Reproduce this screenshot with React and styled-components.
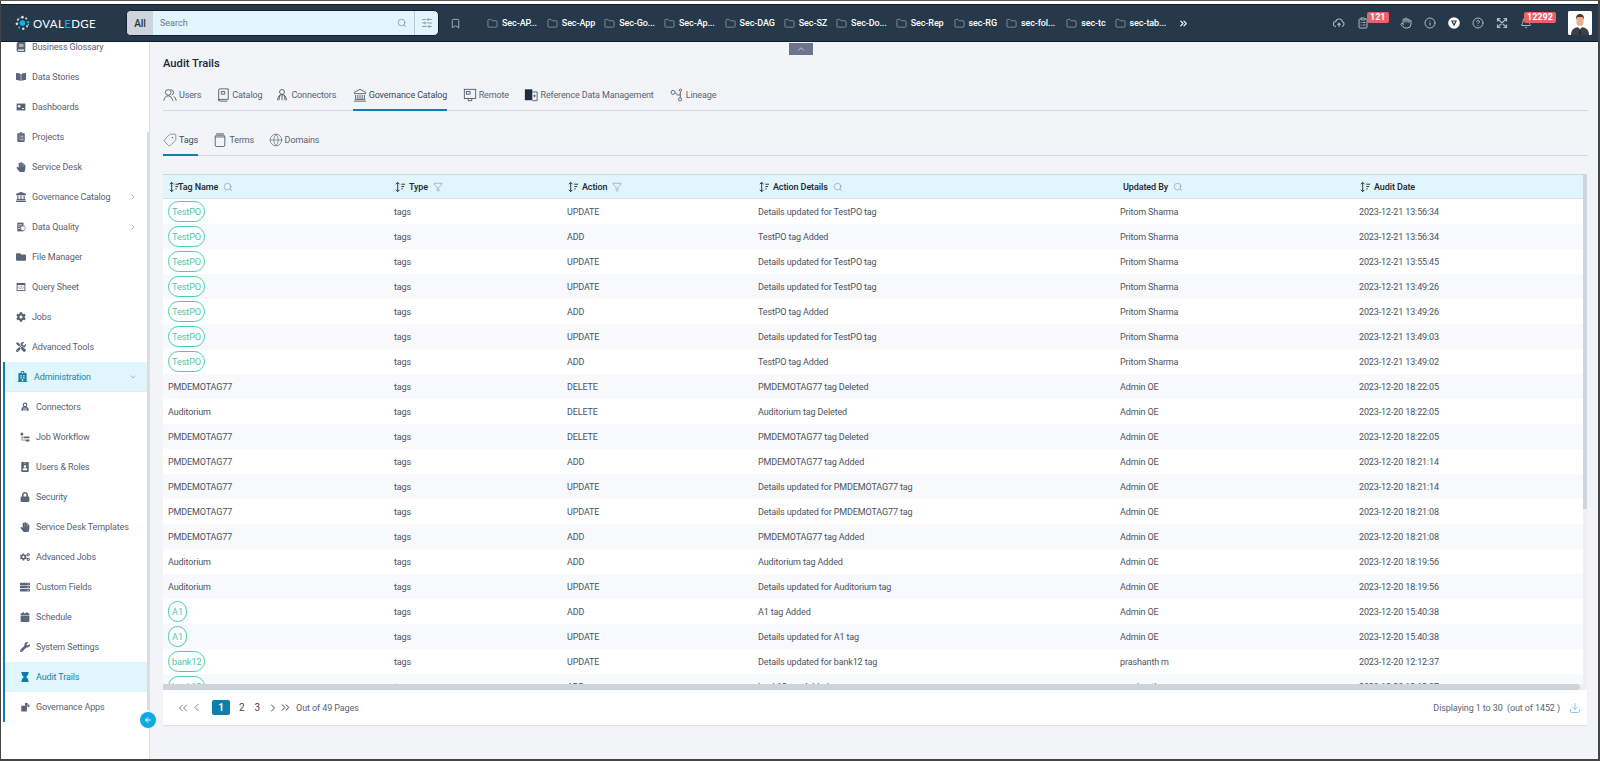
import React from 'react';
import styled, { createGlobalStyle } from 'styled-components';
import {
  Search, SlidersHorizontal, Bookmark, Folder, ChevronsRight, ChevronsLeft, ChevronLeft, ChevronRight,
  ChevronDown, ChevronUp, ClipboardList, Info, CircleHelp, Bell, Filter, Tag, Globe, Download, ArrowLeft, Hand
} from 'lucide-react';
import {
  FaBook, FaClipboardList, FaLandmark, FaFolder, FaCogs, FaTools, FaHospital, FaLock, FaServer,
  FaCalendar, FaWrench, FaHourglass, FaIdBadge, FaHandPaper, FaBookOpen, FaCog
} from 'react-icons/fa';

const Global = createGlobalStyle`
  html, body { margin: 0; padding: 0; background: #fff; }
  body { font-family: Roboto, "Liberation Sans", sans-serif; overflow: hidden; }
  * { box-sizing: border-box; }
`;

const Frame = styled.div`
  position: relative; width: 1600px; height: 761px; display: flex; flex-direction: column;
  background: #fff; border-top: 1px solid #555; border-left: 1px solid #444; border-right: 2px solid #444; border-bottom: 2px solid #444;
  overflow: hidden;
`;
const TopStrip = styled.div` height: 3px; flex: none; background: #fff; `;
const Header = styled.header`
  height: 38px; flex: none; display: flex; align-items: center; background: #26394a;
  border-top: 1px solid #101e2a; border-bottom: 1px solid #101e2a; padding: 0 6px 0 14px; color: #fff;
`;
const Logo = styled.div` display: flex; align-items: center; gap: 3px; width: 81px; flex: none; `;
const LogoText = styled.span`
  font-family: Lato, "Open Sans", sans-serif; font-size: 11.5px; font-weight: 400; letter-spacing: 0.35px; color: #fff;
  white-space: nowrap;
  b { color: #14b1e7; font-weight: 400; }
`;
const SearchBox = styled.div`
  margin-left: 30px; width: 313px; height: 26px; flex: none; display: flex; border-radius: 5px; overflow: hidden;
  background: #e0f5fc; border: 1px solid #10202c; color: #4b5563;
`;
const SearchAll = styled.span`
  width: 26px; background: #cfd3db; display: flex; align-items: center; justify-content: center;
  font-size: 10px; font-weight: 500; color: #27313f;
`;
const SearchHint = styled.span`
  flex: 1; display: flex; align-items: center; padding-left: 7px; font-size: 9px; color: #6b7785;
`;
const SearchIcon = styled.span`
  width: 24px; display: flex; align-items: center; justify-content: center; color: #8c97a3;
`;
const SearchOptions = styled.span`
  width: 24px; display: flex; align-items: center; justify-content: center; border-left: 1px solid #b9c8d0; color: #5a6675;
`;
const BookmarkSlot = styled.span` margin-left: 11px; display: flex; color: #aab6c0; `;
const Folders = styled.nav` margin-left: 26px; display: flex; align-items: center; gap: 9px; `;
const FolderItem = styled.span`
  display: flex; align-items: center; gap: 4px; font-size: 9px; letter-spacing: -0.1px; font-weight: 500; color: #fff; white-space: nowrap;
  svg { color: #aab6c0; flex: none; }
  &:nth-child(n + 2) { margin-left: ${p => p.$nudge || 0}px; }
`;
const More = styled.span` display: flex; margin-left: 3px; color: #fff; `;
const Tools = styled.div` margin-left: auto; display: flex; align-items: center; gap: 12px; color: #aeb9c2; `;
const Tool = styled.span`
  position: relative; display: flex; width: 12px; height: 12px; flex: none; margin-left: ${p => p.$gap || 0}px;
`;
const Badge = styled.span`
  position: absolute; top: -5px; left: ${p => p.$left}px; padding: 0 3px; height: 11px; line-height: 11px; border-radius: 2px;
  background: #ea6166; color: #fff; font-size: 9px; font-weight: 700; white-space: nowrap;
`;
const Avatar = styled.span`
  display: flex; margin-left: 24px; width: 24px; height: 24px; border-radius: 2px; background: #fff; overflow: hidden; flex: none;
`;

const Body = styled.div` flex: 1; display: flex; min-height: 0; `;
const Side = styled.aside`
  position: relative; width: 149px; flex: none; background: #fff; overflow: hidden; padding-right: 2px;
  border-right: 1px solid #dde0e8;
`;
const SideThumb = styled.span`
  position: absolute; right: 0; top: 90px; width: 2px; height: 578px; background: #d9dce5;
`;
const SideList = styled.div` margin-top: -10px; `;
const Item = styled.div`
  height: 30px; display: flex; align-items: center; font-size: 9px; letter-spacing: -0.13px; white-space: nowrap;
  padding-left: 15px; gap: 6px;
  color: ${p => (p.$active ? '#1c7fa6' : '#586174')};
  background: ${p => (p.$active ? '#e0f5fc' : 'transparent')};
  svg.ico { width: 10px; height: 10px; flex: none; color: ${p => (p.$active ? '#0d7ea8' : '#5a6478')}; }
`;
const Chevron = styled.span` margin-left: auto; margin-right: 10px; display: flex; color: #8a93a3; `;
const Group = styled.div` margin-left: 2px; border-left: 2px solid #0d7ea8; `;
const GroupHead = styled(Item)`
  background: #e0f5fc; color: #2c7fa3; padding-left: 12px; gap: 6px; border-bottom: 1px solid #e3eaee;
  svg.ico { width: 11px; height: 11px; color: #1e7ea6; }
`;
const SubItem = styled(Item)` padding-left: 15px; `;
const IconTint = styled.span` display: flex; color: #5a6478; flex: none; `;
const Collapse = styled.span`
  position: absolute; left: 139px; top: 711px; width: 16px; height: 16px; border-radius: 50%; background: #0eaae3; color: #fff;
  display: flex; align-items: center; justify-content: center;
`;
const Pull = styled.span`
  position: absolute; left: 788px; top: 42px; width: 24px; height: 12px; background: #6b7590; color: #cfd3db;
  display: flex; align-items: center; justify-content: center;
`;

const Main = styled.main`
  flex: 1; min-width: 0; background: #f2f4f8; padding: 14px 10px 0 13px; display: flex; flex-direction: column;
`;
const Title = styled.h1` margin: 0 0 8px; font-size: 11.2px; line-height: 16px; font-weight: 500; color: #1d2733; `;
const TabBar = styled.div`
  display: flex; height: 31px; flex: none; border-bottom: 1px solid #d5d8df;
  margin-bottom: ${p => p.$mb || 0}px;
`;
const TabLink = styled.div`
  display: flex; align-items: center; gap: 2px; height: 31px; margin-right: ${p => p.$mr}px; font-size: 9px; letter-spacing: -0.13px; white-space: nowrap;
  color: ${p => (p.$on ? '#3f4858' : '#596274')};
  border-bottom: 2px solid ${p => (p.$on ? '#137fa8' : 'transparent')};
  svg { color: #4c5666; flex: none; }
`;

const Card = styled.section` width: 1424px; flex: none; display: flex; flex-direction: column; `;
const Viewport = styled.div` display: flex; height: 510px; `;
const Rows = styled.div` width: 1420px; flex: none; overflow: hidden; `;
const VTrack = styled.div` width: 4px; background: #f0f0f0; `;
const VThumb = styled.div` height: 335px; background: #cfd5dc; `;
const HTrack = styled.div` height: 6px; background: #f0f0f0; `;
const HThumb = styled.div` height: 6px; width: 1417px; background: #cfd3da; border-radius: 0 3px 3px 0; `;
const grid = `display: grid; grid-template-columns: 226px 173px 191px 362px 239px 1fr; padding-left: 5px; align-items: center;`;
const HeadRow = styled.div`
  ${grid} height: 25px; background: #e0f5fc; border-top: 1px solid #c9d8de; border-bottom: 1px solid #d5e2e7;
`;
const HeadCell = styled.div`
  display: flex; align-items: center; gap: 3px; font-size: 9px; letter-spacing: -0.1px; font-weight: 500; color: #20262f; white-space: nowrap;
  padding-left: ${p => p.$pl || 0}px; svg { flex: none; }
  svg.hint { color: #6c7684; margin-left: 2px; }
`;
const TightName = styled.span` margin-left: -5px; `;
const Row = styled.div`
  ${grid} height: 25px; background: #fff; font-size: 9px; letter-spacing: -0.13px; color: #4b5362; white-space: nowrap;
  &:nth-child(odd) { background: #f7f9fb; }
`;
const Pill = styled.span`
  display: inline-flex; align-items: center; height: 21px; padding: 0 3px; min-width: 19px; justify-content: center; border: 1px solid #3fd2ae;
  border-radius: 11px; color: #53c7a3; font-size: 9.2px; background: #fff;
`;
const Pager = styled.div`
  height: 35px; background: #fff; display: flex; align-items: center; padding: 0 6px 0 13px; box-shadow: 0 1px 1px #dfe2e8;
  color: #5a6373; font-size: 9px; letter-spacing: -0.1px;
`;
const PagerIcons = styled.span` display: flex; align-items: center; margin-right: ${p => p.$mr}px; color: ${p => p.$c || '#4b5463'}; `;
const PageOn = styled.span`
  width: 18px; height: 15px; border-radius: 2px; background: #0f7ea9; color: #fff; font-weight: 700; font-size: 10px;
  display: flex; align-items: center; justify-content: center; margin-right: 9px;
`;
const PageNo = styled.span` font-size: 10px; color: #3f4858; margin-right: ${p => p.$mr || 10}px; `;
const Showing = styled.span` margin-left: auto; margin-right: 9px; `;
const DownloadIcon = styled.span` display: flex; color: #4ba7cb; `;

const SortIcon = () => (
  <svg width="12" height="12" viewBox="0 0 13 12" fill="none" stroke="#20262f" strokeWidth="1">
    <path d="M4 1v10M2 3l2-2 2 2M2 9l2 2 2-2M8 3h4M8 5.5h3M8 8h1.5" />
  </svg>
);
const Hint = ({ kind }) => kind === 'filter'
  ? <Filter className="hint" size={10} strokeWidth={1.1} />
  : <Search className="hint" size={10} strokeWidth={1.1} />;

const LogoMark = () => (
  <svg width="18" height="18" viewBox="0 0 18 18">
    <circle cx="9" cy="9" r="3.4" fill="#14b1e7" />
    {[[9,2,1.6],[13.5,3.6,1.3],[15.8,8,1.5],[14.5,13,1.3],[10,15.8,1.5],[5,14.5,1.3],[2.3,10,1.6],[3.6,5,1.3],[6,3,1],[16,11,.8]].map(([x,y,r],i)=>(
      <circle key={i} cx={x} cy={y} r={r} fill={i%3===2?'#14b1e7':'#d7dee4'} />
    ))}
  </svg>
);
const CloudGauge = () => (
  <svg width="12" height="12" viewBox="0 0 24 24" fill="none" stroke="currentColor" strokeWidth="2.2">
    <path d="M6 19a5 5 0 0 1-.5-10A7 7 0 0 1 19 9.500a5 5 0 0 1-1 9.500" />
    <path d="M12 20v-7M9 15.500l3-3 3 3" />
  </svg>
);
const ShieldDot = () => (
  <svg width="12" height="12" viewBox="0 0 12 12">
    <circle cx="6" cy="6" r="5.800" fill="#fff" />
    <path d="M3 3.500h6L6 9.500z" fill="#26394a" />
    <path d="M4.800 4.500h2.400L6 6.800z" fill="#fff" />
  </svg>
);
const ExpandCross = () => (
  <svg width="12" height="12" viewBox="0 0 12 12" fill="none" stroke="currentColor" strokeWidth="1.2">
    <path d="M2 2l8 8M10 2l-8 8M1.500 4.500v-3h3M7.500 1.500h3v3M10.500 7.500v3h-3M4.500 10.500h-3v-3" />
  </svg>
);
const Person = () => (
  <svg width="24" height="24" viewBox="0 0 24 24">
    <rect width="24" height="24" fill="#fff" />
    <path d="M3 24c0-6 4-8 9-8s9 2 9 8z" fill="#3c3f46" />
    <path d="M10 16l2 3 2-3z" fill="#fff" />
    <path d="M11.500 17.500h1l.5 6h-2z" fill="#23262c" />
    <rect x="8.500" y="5" width="7" height="10" rx="3.500" fill="#e7b18f" />
    <path d="M8 9c-.5-4 1.500-6 4-6s4.500 2 4 6c-.5-2-1-3-2-3h-4c-1 0-1.500 1-2 3z" fill="#5b3420" />
  </svg>
);
const Umbrella = ({ size = 14, weight = 1 }) => (
  <svg width={size} height={size} viewBox="0 0 16 16" fill="none" stroke="currentColor" strokeWidth={weight}>
    <circle cx="8" cy="4.500" r="2.800" />
    <path d="M3 14c0-4 2-6.500 5-6.500s5 2.500 5 6.500M8 7.500V14M5.500 8l-1 6M10.500 8l1 6" />
  </svg>
);
const DuoUsers = () => (
  <svg width="14" height="14" viewBox="0 0 16 16" fill="none" stroke="currentColor" strokeWidth="1">
    <circle cx="6" cy="5" r="3.200" /><path d="M1 14.500c.4-3.500 2.300-5.500 5-5.500s4.600 2 5 5.500" />
    <path d="M9 2a3.200 3.200 0 0 1 1 6.200M12 9.500c1.700.8 2.700 2.500 3 5" />
  </svg>
);
const CatalogIcon = () => (
  <svg width="14" height="14" viewBox="0 0 16 16" fill="none" stroke="currentColor" strokeWidth="1">
    <path d="M3 2.500a1.500 1.500 0 0 1 1.500-1.500H14v12H4.500A1.500 1.500 0 0 0 3 14.500z" />
    <path d="M3 13c.3 1.300.8 2 2 2h8M6 4h4v3H6z" />
  </svg>
);
const BankIcon = () => (
  <svg width="14" height="14" viewBox="0 0 16 16" fill="none" stroke="currentColor" strokeWidth="1">
    <path d="M8 1.500L1.500 5v1.500h13V5zM3 8v4.500M5.500 8v4.500M8 8v4.500M10.500 8v4.500M13 8v4.500M2 13h12M1 15h14" />
  </svg>
);
const RemoteIcon = () => (
  <svg width="14" height="14" viewBox="0 0 16 16" fill="none" stroke="currentColor" strokeWidth="1">
    <rect x="1.500" y="1.500" width="13" height="10.500" /><rect x="4" y="4" width="4" height="3" />
    <path d="M6 12v2.500h4V12" />
  </svg>
);
const RefIcon = () => (
  <svg width="14" height="14" viewBox="0 0 16 16">
    <rect x="1" y="1.500" width="8.500" height="12.500" fill="#1f2d42" />
    <path d="M9.500 4.500h5.500v10H9.500M10.500 9h3M12 7.500v3" fill="none" stroke="#4c5666" strokeWidth="1" />
  </svg>
);
const LineageIcon = () => (
  <svg width="14" height="14" viewBox="0 0 16 16" fill="none" stroke="currentColor" strokeWidth="1">
    <circle cx="3.500" cy="5" r="2.300" /><circle cx="12" cy="2.500" r="1.300" /><circle cx="11.500" cy="13" r="1.800" />
    <path d="M5.800 5.500l3 2.500h3V4M11.800 8v3.200" />
  </svg>
);
const JarIcon = () => (
  <svg width="14" height="14" viewBox="0 0 16 16" fill="none" stroke="currentColor" strokeWidth="1">
    <rect x="2.500" y="2.500" width="11" height="13" rx="1.800" /><path d="M3.500 1h9M2.500 4.500h11" />
  </svg>
);
const DashIcon = () => (
  <svg className="ico" viewBox="0 0 16 16"><path fill="currentColor" d="M1 2.500h14v11H1z" /><path fill="#fff" d="M3 5h4v3.500H3zM9.500 9.500H13V11H9.500z" /></svg>
);
const QueryIcon = () => (
  <svg className="ico" viewBox="0 0 16 16"><path fill="currentColor" d="M1 1.500h14v13H1z" /><path fill="#fff" d="M2.500 5h11v8h-11z" /><path fill="none" stroke="currentColor" d="M6 7L4 9l2 2M10 7l2 2-2 2M8.800 6.800L7.200 11.200" /></svg>
);
const QualityIcon = () => (
  <svg className="ico" viewBox="0 0 16 16"><path fill="currentColor" d="M2 1h10v14H2z" /><path fill="#fff" d="M3.500 4H10v1H3.500zM3.500 7H7v1H3.500zM3.500 10H7v1H3.500z" /><circle cx="11" cy="10" r="3.800" fill="#fff" stroke="currentColor" /></svg>
);
const FlowIcon = () => (
  <svg className="ico" viewBox="0 0 16 16" fill="currentColor"><path d="M1 1h4v4H1zM6 7h9v3H6zM9 12h6v3H9z" /><path d="M3 5v4h3M3 9v4h6" fill="none" stroke="currentColor" /></svg>
);
const AppsIcon = () => (
  <svg className="ico" viewBox="0 0 16 16" fill="currentColor"><path d="M2 6h9v9H2zM8 1l4.500 1-1 4H8z" /><path d="M12 4h3v4h-3z" /></svg>
);

const folders = [['Sec-AP...', 0], ['Sec-App', 1], ['Sec-Go...', 0], ['Sec-Ap...', 0], ['Sec-DAG', 1], ['Sec-SZ', 0], ['Sec-Do...', 0], ['Sec-Rep', 0], ['sec-RG', 1], ['sec-fol...', 0], ['sec-tc', 2], ['sec-tab...', 0]];

const i = (C) => <C className="ico" />;
const topItems = [
  ['Business Glossary', i(FaBook)],
  ['Data Stories', i(FaBookOpen)],
  ['Dashboards', <DashIcon />],
  ['Projects', i(FaClipboardList)],
  ['Service Desk', i(FaHandPaper)],
  ['Governance Catalog', i(FaLandmark), true],
  ['Data Quality', <QualityIcon />, true],
  ['File Manager', i(FaFolder)],
  ['Query Sheet', <QueryIcon />],
  ['Jobs', i(FaCog)],
  ['Advanced Tools', i(FaTools)],
];
const subItems = [
  ['Connectors', <IconTint><Umbrella size={10} weight={1.8} /></IconTint>],
  ['Job Workflow', <FlowIcon />],
  ['Users & Roles', i(FaIdBadge)],
  ['Security', i(FaLock)],
  ['Service Desk Templates', i(FaHandPaper)],
  ['Advanced Jobs', i(FaCogs)],
  ['Custom Fields', i(FaServer)],
  ['Schedule', i(FaCalendar)],
  ['System Settings', i(FaWrench)],
  ['Audit Trails', i(FaHourglass), true],
  ['Governance Apps', <AppsIcon />],
];

const tabs = [
  ['Users', <DuoUsers />, 15],
  ['Catalog', <CatalogIcon />, 13],
  ['Connectors', <Umbrella />, 16.5],
  ['Governance Catalog', <BankIcon />, 15.5, true],
  ['Remote', <RemoteIcon />, 15.5],
  ['Reference Data Management', <RefIcon />, 16],
  ['Lineage', <LineageIcon />, 0],
];
const subTabs = [
  ['Tags', <Tag size={14} strokeWidth={1} style={{ transform: 'scaleX(-1)' }} />, 15.5, true],
  ['Terms', <JarIcon />, 14.5],
  ['Domains', <Globe size={14} strokeWidth={1} />, 0],
];

const U = 'Pritom Sharma', A = 'Admin OE';
const det = (n) => `Details updated for ${n} tag`;
const data = [
  ['TestPO', 1, 'UPDATE', det('TestPO'), U, '2023-12-21 13:56:34'],
  ['TestPO', 1, 'ADD', 'TestPO tag Added', U, '2023-12-21 13:56:34'],
  ['TestPO', 1, 'UPDATE', det('TestPO'), U, '2023-12-21 13:55:45'],
  ['TestPO', 1, 'UPDATE', det('TestPO'), U, '2023-12-21 13:49:26'],
  ['TestPO', 1, 'ADD', 'TestPO tag Added', U, '2023-12-21 13:49:26'],
  ['TestPO', 1, 'UPDATE', det('TestPO'), U, '2023-12-21 13:49:03'],
  ['TestPO', 1, 'ADD', 'TestPO tag Added', U, '2023-12-21 13:49:02'],
  ['PMDEMOTAG77', 0, 'DELETE', 'PMDEMOTAG77 tag Deleted', A, '2023-12-20 18:22:05'],
  ['Auditorium', 0, 'DELETE', 'Auditorium tag Deleted', A, '2023-12-20 18:22:05'],
  ['PMDEMOTAG77', 0, 'DELETE', 'PMDEMOTAG77 tag Deleted', A, '2023-12-20 18:22:05'],
  ['PMDEMOTAG77', 0, 'ADD', 'PMDEMOTAG77 tag Added', A, '2023-12-20 18:21:14'],
  ['PMDEMOTAG77', 0, 'UPDATE', det('PMDEMOTAG77'), A, '2023-12-20 18:21:14'],
  ['PMDEMOTAG77', 0, 'UPDATE', det('PMDEMOTAG77'), A, '2023-12-20 18:21:08'],
  ['PMDEMOTAG77', 0, 'ADD', 'PMDEMOTAG77 tag Added', A, '2023-12-20 18:21:08'],
  ['Auditorium', 0, 'ADD', 'Auditorium tag Added', A, '2023-12-20 18:19:56'],
  ['Auditorium', 0, 'UPDATE', det('Auditorium'), A, '2023-12-20 18:19:56'],
  ['A1', 1, 'ADD', 'A1 tag Added', A, '2023-12-20 15:40:38'],
  ['A1', 1, 'UPDATE', det('A1'), A, '2023-12-20 15:40:38'],
  ['bank12', 1, 'UPDATE', det('bank12'), 'prashanth m', '2023-12-20 12:12:37'],
  ['bank12', 1, 'ADD', 'bank12 tag Added', 'prashanth m', '2023-12-20 12:12:37'],
];

export default function App() {
  return (
    <Frame>
      <Global />
      <TopStrip />
      <Header>
        <Logo><LogoMark /><LogoText>OVAL<b>E</b>DGE</LogoText></Logo>
        <SearchBox>
          <SearchAll>All</SearchAll>
          <SearchHint>Search</SearchHint>
          <SearchIcon><Search size={10} /></SearchIcon>
          <SearchOptions><SlidersHorizontal size={12} strokeWidth={1.2} /></SearchOptions>
        </SearchBox>
        <BookmarkSlot><Bookmark size={11} /></BookmarkSlot>
        <Folders>
          {folders.map(([name, nudge]) => (
            <FolderItem key={name} $nudge={nudge}><Folder size={11} strokeWidth={1.4} />{name}</FolderItem>
          ))}
          <More><ChevronsRight size={11} strokeWidth={2.5} /></More>
        </Folders>
        <Tools>
          <Tool><CloudGauge /></Tool>
          <Tool><ClipboardList size={12} /><Badge $left={10}>121</Badge></Tool>
          <Tool $gap={19}><Hand size={12} /></Tool>
          <Tool><Info size={12} /></Tool>
          <Tool><ShieldDot /></Tool>
          <Tool><CircleHelp size={12} /></Tool>
          <Tool><ExpandCross /></Tool>
          <Tool><Bell size={12} /><Badge $left={4}>12292</Badge></Tool>
          <Avatar><Person /></Avatar>
        </Tools>
      </Header>
      <Body>
        <Side>
          <SideThumb />
          <SideList>
            {topItems.map(([label, icon, more]) => (
              <Item key={label}>{icon}{label}{more && <Chevron><ChevronRight size={8} /></Chevron>}</Item>
            ))}
            <Group>
              <GroupHead>{i(FaHospital)}Administration<Chevron><ChevronDown size={8} /></Chevron></GroupHead>
              {subItems.map(([label, icon, on]) => (
                <SubItem key={label} $active={on}>{icon}{label}</SubItem>
              ))}
            </Group>
          </SideList>
        </Side>
        <Main>
          <Title>Audit Trails</Title>
          <TabBar $mb={14}>
            {tabs.map(([label, icon, mr, on]) => (
              <TabLink key={label} $mr={mr} $on={on}>{icon}{label}</TabLink>
            ))}
          </TabBar>
          <TabBar $mb={18}>
            {subTabs.map(([label, icon, mr, on]) => (
              <TabLink key={label} $mr={mr} $on={on}>{icon}{label}</TabLink>
            ))}
          </TabBar>
          <Card>
            <Viewport>
              <Rows>
                <HeadRow>
                  <HeadCell><SortIcon /><TightName>Tag Name</TightName><Hint /></HeadCell>
                  <HeadCell><SortIcon />Type<Hint kind="filter" /></HeadCell>
                  <HeadCell><SortIcon />Action<Hint kind="filter" /></HeadCell>
                  <HeadCell><SortIcon />Action Details<Hint /></HeadCell>
                  <HeadCell $pl={3}>Updated By<Hint /></HeadCell>
                  <HeadCell><SortIcon />Audit Date</HeadCell>
                </HeadRow>
                {data.map((r, n) => (
                  <Row key={n}>
                    <div>{r[1] ? <Pill>{r[0]}</Pill> : r[0]}</div>
                    <div>tags</div>
                    <div>{r[2]}</div>
                    <div>{r[3]}</div>
                    <div>{r[4]}</div>
                    <div>{r[5]}</div>
                  </Row>
                ))}
              </Rows>
              <VTrack><VThumb /></VTrack>
            </Viewport>
            <HTrack><HThumb /></HTrack>
            <Pager>
              <PagerIcons $mr={9}><ChevronsLeft size={14} strokeWidth={1.3} /><ChevronLeft size={13} strokeWidth={1.3} /></PagerIcons>
              <PageOn>1</PageOn>
              <PageNo>2</PageNo>
              <PageNo $mr={7}>3</PageNo>
              <PagerIcons $mr={4} $c="#2a3340"><ChevronRight size={12} strokeWidth={1.8} /><ChevronsRight size={13} strokeWidth={1.8} /></PagerIcons>
              Out of 49 Pages
              <Showing>Displaying 1 to 30 &nbsp;(out of 1452 )</Showing>
              <DownloadIcon><Download size={12} strokeWidth={1.2} /></DownloadIcon>
            </Pager>
          </Card>
        </Main>
      </Body>
      <Pull><ChevronUp size={10} /></Pull>
      <Collapse><ArrowLeft size={8} strokeWidth={3} /></Collapse>
    </Frame>
  );
}
